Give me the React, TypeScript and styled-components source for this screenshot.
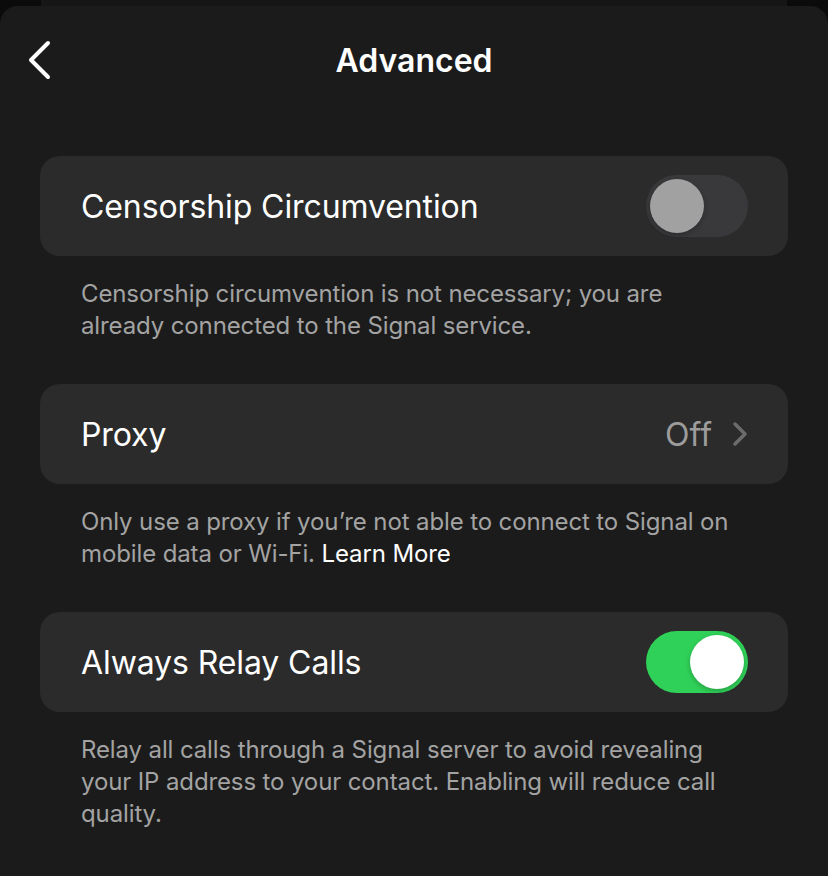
import React, { useState } from "react";
import styled, { createGlobalStyle } from "styled-components";

const GlobalStyle = createGlobalStyle`
  html, body {
    margin: 0;
    padding: 0;
    background: #0b0b0b;
  }
  body {
    font-family: Inter, "Noto Sans", "Liberation Sans", sans-serif;
    -webkit-font-smoothing: antialiased;
  }
`;

const Screen = styled.div`
  width: 828px;
  height: 876px;
  overflow: hidden;
  display: flex;
  flex-direction: column;
  background: #0b0b0b;
`;

/* the sheet underneath, peeking above the current one */
const SheetBehind = styled.div`
  height: 6px;
  margin: 0 41px;
  background: #161616;
  flex-shrink: 0;
`;

const Sheet = styled.div`
  flex: 1;
  background: #1b1b1b;
  border-radius: 18px 18px 0 0;
  display: flex;
  flex-direction: column;
`;

const Header = styled.div`
  height: 108px;
  display: grid;
  grid-template-columns: 60px 1fr 60px;
  align-items: center;
  padding: 0 20px;
`;

const BackButton = styled.button`
  border: none;
  background: none;
  padding: 0 0 0 7px;
  display: flex;
  align-items: center;
  cursor: pointer;
`;

const Title = styled.h1`
  margin: 0;
  text-align: center;
  color: #ffffff;
  font-size: 32px;
  font-weight: 600;
`;

const Content = styled.div`
  padding: 42px 40px 0;
  display: flex;
  flex-direction: column;
`;

const Card = styled.div`
  height: 100px;
  border-radius: 20px;
  background: #2b2b2b;
  display: flex;
  align-items: center;
  justify-content: space-between;
  padding: 0 40px 0 41px;
`;

const RowLabel = styled.span`
  color: #ffffff;
  font-size: 32px;
  font-weight: 400;
  letter-spacing: -0.1px;
`;

const RowValue = styled.span`
  display: flex;
  align-items: center;
  gap: 20px;
  color: #9c9c9c;
  font-size: 32px;
`;

const Track = styled.button<{ $on: boolean }>`
  width: 102px;
  height: 62px;
  border-radius: 31px;
  border: none;
  padding: 0;
  position: relative;
  cursor: pointer;
  background: ${(p) => (p.$on ? "#30d158" : "#39393c")};
  transition: background 0.2s;
`;

const Knob = styled.span<{ $on: boolean }>`
  position: absolute;
  top: 4px;
  left: ${(p) => (p.$on ? "44px" : "4px")};
  width: 54px;
  height: 54px;
  border-radius: 50%;
  background: ${(p) => (p.$on ? "#ffffff" : "#a1a1a1")};
  box-shadow: 0 2px 5px rgba(0, 0, 0, 0.25);
  transition: left 0.2s;
`;

const Footer = styled.p`
  margin: 22px 0 42px;
  padding: 0 41px;
  color: #a3a3a3;
  font-size: 24px;
  line-height: 32px;
  letter-spacing: -0.12px;
`;

const FooterLink = styled.a`
  color: #ffffff;
  text-decoration: none;
`;

function Toggle({ on, onChange }: { on: boolean; onChange: (v: boolean) => void }) {
  return (
    <Track $on={on} onClick={() => onChange(!on)}>
      <Knob $on={on} />
    </Track>
  );
}

export default function App() {
  const [censorship, setCensorship] = useState(false);
  const [relay, setRelay] = useState(true);

  return (
    <Screen>
      <GlobalStyle />
      <SheetBehind />
      <Sheet>
        <Header>
          <BackButton aria-label="Back">
            <svg width="26" height="40" viewBox="0 0 26 40">
              <polyline
                points="21,3 4,20 21,37"
                fill="none"
                stroke="#ffffff"
                strokeWidth="4"
                strokeLinecap="round"
                strokeLinejoin="round"
              />
            </svg>
          </BackButton>
          <Title>Advanced</Title>
          <span />
        </Header>

        <Content>
          <Card>
            <RowLabel>Censorship Circumvention</RowLabel>
            <Toggle on={censorship} onChange={setCensorship} />
          </Card>
          <Footer>
            Censorship circumvention is not necessary; you are already connected to the Signal
            service.
          </Footer>

          <Card>
            <RowLabel>Proxy</RowLabel>
            <RowValue>
              Off
              <svg width="16" height="26" viewBox="0 0 16 26">
                <polyline
                  points="3,3 13,13 3,23"
                  fill="none"
                  stroke="#6c6c6c"
                  strokeWidth="3.5"
                  strokeLinecap="round"
                  strokeLinejoin="round"
                />
              </svg>
            </RowValue>
          </Card>
          <Footer>
            Only use a proxy if you’re not able to connect to Signal on mobile data or Wi-Fi.{" "}
            <FooterLink href="#">Learn More</FooterLink>
          </Footer>

          <Card>
            <RowLabel>Always Relay Calls</RowLabel>
            <Toggle on={relay} onChange={setRelay} />
          </Card>
          <Footer>
            Relay all calls through a Signal server to avoid revealing your IP address to your
            contact. Enabling will reduce call quality.
          </Footer>
        </Content>
      </Sheet>
    </Screen>
  );
}
